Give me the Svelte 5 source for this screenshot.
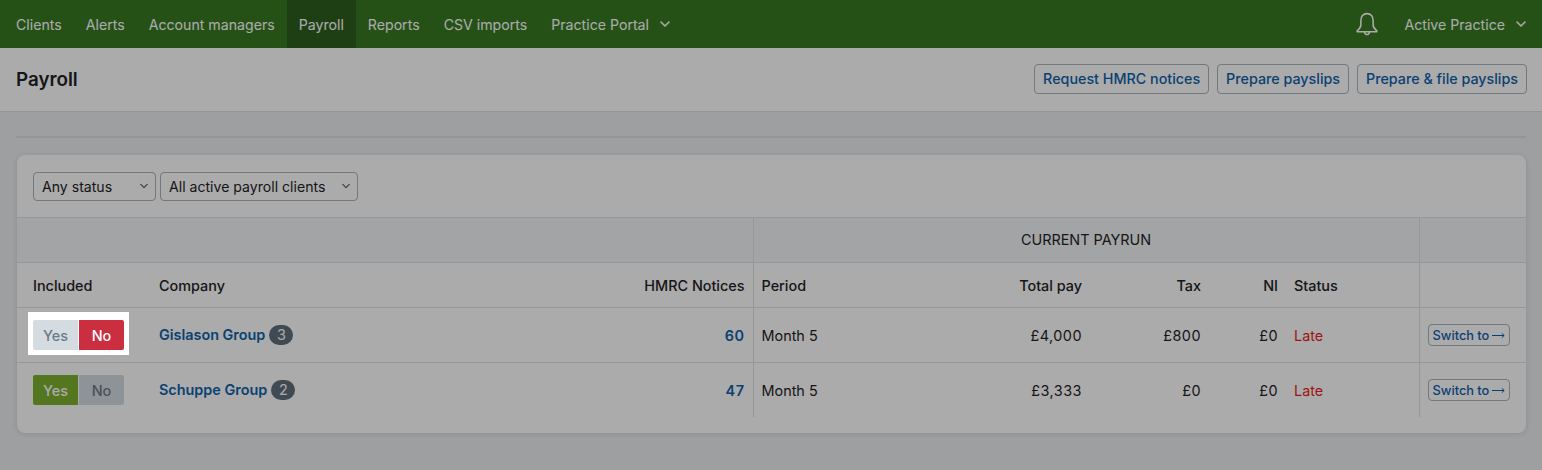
<script lang="ts">
    const nav = ["Clients", "Alerts", "Account managers", "Payroll", "Reports", "CSV imports"];
    const rows = [
        { included: false, company: "Gislason Group", count: 3, notices: 60, total: "£4,000", tax: "£800" },
        { included: true, company: "Schuppe Group", count: 2, notices: 47, total: "£3,333", tax: "£0" },
    ];
</script>

{#snippet chevron(cls)}
    <svg class={cls} viewBox="0 0 10 6" width="10" height="6" aria-hidden="true">
        <path d="M1 1l4 4 4-4" fill="none" stroke="currentColor" stroke-width="1.6" stroke-linecap="round" stroke-linejoin="round" />
    </svg>
{/snippet}

<nav class="topbar">
    <ul class="links">
        {#each nav as item}
            <li class:active={item === "Payroll"}>{item}</li>
        {/each}
        <li>Practice Portal {@render chevron("nav-chev")}</li>
    </ul>
    <div class="account">
        <svg class="bell" viewBox="0 0 22 22" width="24" height="24" aria-hidden="true">
            <path d="M11 1.5c-3.6 0-5.600 2.700-5.600 6.200v4.100c0 2-.9 3.600-3.400 5.400v.9h18v-.9c-2.500-1.800-3.400-3.400-3.400-5.400V7.700c0-3.500-2-6.200-5.600-6.200zM8.800 18.600c.2 1.200 1.100 2 2.200 2s2-.8 2.200-2" fill="none" stroke="currentColor" stroke-width="1.400" stroke-linejoin="round" />
        </svg>
        <span>Active Practice</span>
        {@render chevron("nav-chev")}
    </div>
</nav>

<header class="page-head">
    <h1>Payroll</h1>
    <div class="actions">
        <button>Request HMRC notices</button>
        <button>Prepare payslips</button>
        <button>Prepare &amp; file payslips</button>
    </div>
</header>

<main>
    <hr />
    <section class="card">
        <div class="filters">
            <div class="select status">Any status {@render chevron("sel-chev")}</div>
            <div class="select clients">All active payroll clients {@render chevron("sel-chev")}</div>
        </div>
        <table>
            <colgroup>
                <col style="width:134px" />
                <col style="width:400px" />
                <col style="width:202px" />
                <col style="width:150px" />
                <col style="width:187px" />
                <col style="width:119px" />
                <col style="width:77px" />
                <col style="width:133px" />
                <col />
            </colgroup>
            <thead>
                <tr class="group">
                    <th colspan="3"></th>
                    <th colspan="5" class="ruled center">CURRENT PAYRUN</th>
                    <th class="ruled"></th>
                </tr>
                <tr class="cols">
                    <th class="first">Included</th>
                    <th>Company</th>
                    <th class="num">HMRC Notices</th>
                    <th class="ruled">Period</th>
                    <th class="num">Total pay</th>
                    <th class="num">Tax</th>
                    <th class="num">NI</th>
                    <th>Status</th>
                    <th class="ruled"></th>
                </tr>
            </thead>
            <tbody>
                {#each rows as row, i}
                    <tr>
                        <td class="first">
                            <div class:spot={i === 0}>
                                <div class="toggle">
                                    <span class="yes" class:on={row.included}>Yes</span>
                                    <span class="no" class:on={!row.included}>No</span>
                                </div>
                            </div>
                        </td>
                        <td><a href="#top" class="company">{row.company}</a> <span class="badge">{row.count}</span></td>
                        <td class="num"><a href="#top" class="notices">{row.notices}</a></td>
                        <td class="ruled">Month 5</td>
                        <td class="num">{row.total}</td>
                        <td class="num">{row.tax}</td>
                        <td class="num">£0</td>
                        <td class="late">Late</td>
                        <td class="ruled switch">
                            <button class="small">
                                Switch to
                                <svg viewBox="0 0 13 7" width="13" height="7" aria-hidden="true">
                                    <path d="M0 3.500h12M9.800 1.300l2.400 2.200-2.400 2.200" fill="none" stroke="currentColor" stroke-width="1" />
                                </svg>
                            </button>
                        </td>
                    </tr>
                {/each}
            </tbody>
        </table>
    </section>
</main>

<style>
    :global(html), :global(body) {
        height: 100%;
        overflow: hidden;
    }
    :global(body) {
        background: #eceef0;
        font-family: Inter, "Liberation Sans", sans-serif;
        font-size: 14.1px;
        color: #1f2327;
    }

    .topbar {
        display: flex;
        justify-content: space-between;
        align-items: stretch;
        height: 48px;
        padding: 0 16px 0 4px;
        background: #387a23;
        color: #fff;
        font-size: 14.15px;
    }
    .links {
        display: flex;
        margin: 0;
        padding: 0;
        list-style: none;
    }
    .links li {
        display: flex;
        align-items: center;
        padding: 0 12px;
        white-space: pre;
    }
    .links li.active {
        background: #2e5f1e;
    }
    .nav-chev {
        margin-left: 11px;
    }
    .links .nav-chev {
        margin-left: 7px;
    }
    .account {
        display: flex;
        align-items: center;
    }
    .bell {
        margin-right: 25px;
    }

    .page-head {
        display: flex;
        justify-content: space-between;
        align-items: center;
        height: 63px;
        padding: 0 15px 0 16px;
        background: #fff;
        border-bottom: 1px solid #dde0e3;
    }
    h1 {
        margin: 0;
        font-size: 18.8px;
        font-weight: 600;
    }
    .actions {
        display: flex;
        gap: 8px;
        margin-bottom: 2px;
    }
    button {
        height: 30px;
        padding: 0 8px;
        border: 1px solid #a9b3bc;
        border-radius: 4px;
        background: #fff;
        color: #0f62ac;
        font: 550 14.3px Inter, "Liberation Sans", sans-serif;
    }

    main {
        padding: 24px 16px 0 16px;
    }
    hr {
        height: 2px;
        margin: 0 0 17px;
        border: 0;
        background: #dcdfe2;
    }
    .card {
        margin-left: 1px;
        border-radius: 8px;
        background: #fff;
        box-shadow: 0 1px 6px rgba(0, 0, 0, 0.12);
        padding-bottom: 16px;
    }
    .filters {
        display: flex;
        gap: 4px;
        height: 62px;
        padding: 17px 16px 0;
        box-sizing: border-box;
    }
    .select {
        display: flex;
        justify-content: space-between;
        align-items: center;
        box-sizing: border-box;
        height: 29px;
        padding: 0 7px 1px 8px;
        border: 1px solid #a9b3bc;
        border-radius: 4px;
    }
    .status { width: 123px; }
    .clients { width: 198px; }
    .sel-chev {
        width: 8px;
        color: #5c6670;
    }

    table {
        width: 100%;
        border-collapse: collapse;
        table-layout: fixed;
        font-size: 14.4px;
    }
    th, td {
        padding: 0 8px;
        text-align: left;
        border-top: 1px solid #dfe2e5;
    }
    th {
        font-weight: 550;
    }
    .group th {
        height: 43px;
        padding-bottom: 1px;
        background: #f4f5f6;
        font-weight: 400;
    }
    .cols th {
        height: 44px;
    }
    td {
        height: 54px;
    }
    .first {
        padding-left: 16px;
    }
    th.num, td.num {
        text-align: right;
    }
    td.num {
        letter-spacing: 0.5px;
    }
    .center {
        text-align: center;
    }
    .ruled {
        border-left: 1px solid #dfe2e5;
    }
    .company, .notices {
        color: #0f62ac;
        font-weight: 600;
        text-decoration: none;
    }
    .badge {
        display: inline-block;
        min-width: 24px;
        height: 20px;
        border-radius: 10px;
        background: #5f6f7c;
        color: #fff;
        line-height: 20px;
        text-align: center;
    }
    .late {
        color: #ee1f24;
    }
    .small {
        display: inline-flex;
        align-items: center;
        gap: 3px;
        height: 22px;
        padding: 0 4px;
        font-size: 12.8px;
        font-weight: 500;
        white-space: nowrap;
    }

    .toggle {
        display: flex;
        gap: 1px;
        width: 91px;
        height: 30px;
        border-radius: 2px;
        overflow: hidden;
        font-weight: 550;
    }
    .toggle span {
        flex: 1;
        display: flex;
        align-items: center;
        justify-content: center;
        background: #d4dbe1;
        color: #6c7a86;
    }
    .toggle .yes.on {
        background: #7cb02f;
        color: #fff;
    }
    .toggle .no.on {
        background: #cb2e3e;
        color: #fff;
    }
    .spot {
        position: relative;
        z-index: 2;
        width: 91px;
        margin: -8px -5px -5px;
        padding: 8px 5px 5px;
        background: #fff;
        box-shadow: 0 0 0 3000px rgba(0, 0, 0, 0.33);
    }
</style>
